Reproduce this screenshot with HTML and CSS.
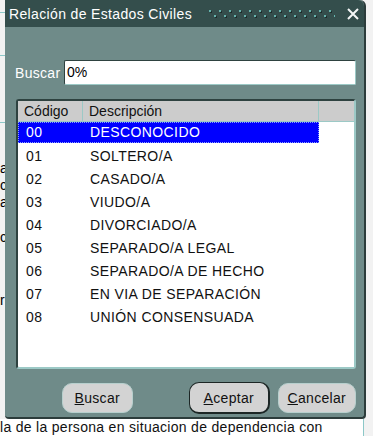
FILE: index.html
```html
<!DOCTYPE html>
<html lang="es">
<head>
  <meta charset="UTF-8">
  <title>Relación de Estados Civiles</title>
  <link rel="stylesheet" href="styles.css">
</head>
<body>
  <!-- page behind the dialog -->
  <div class="page">
    <div class="page-line l1"></div>
    <div class="page-line l2"></div>
    <div class="page-line l3"></div>
    <div class="page-bits">
      <span>a</span><span>c</span><span>a</span><span class="gap">c</span><span class="gap2">r</span>
    </div>
    <div class="page-text">la de la persona en situacion de dependencia con</div>
  </div>

  <!-- LOV dialog -->
  <div class="dialog">
    <div class="title-bar">
      <span class="title">Relación de Estados Civiles</span>
      <svg class="grip" width="126" height="10" viewBox="0 0 126 10">
        <defs>
          <pattern id="dots" width="10" height="10" patternUnits="userSpaceOnUse">
            <rect x="1" y="1" width="2" height="2" fill="#1f2e2d"/>
            <rect x="0" y="0" width="2" height="2" fill="#66b3ad"/>
            <rect x="6" y="6" width="2" height="2" fill="#1f2e2d"/>
            <rect x="5" y="5" width="2" height="2" fill="#66b3ad"/>
          </pattern>
        </defs>
        <rect width="126" height="10" fill="url(#dots)"/>
      </svg>
      <svg class="close" width="12" height="12" viewBox="0 0 12 12">
        <path d="M1 1 L11 11 M11 1 L1 11" stroke="#f4f6f6" stroke-width="2"/>
      </svg>
    </div>
    <div class="dialog-body">
      <div class="search-row">
        <label class="search-label">Buscar</label>
        <div class="search-input">0%</div>
      </div>
      <div class="list">
        <div class="list-head">
          <div class="col-code">Código</div>
          <div class="col-desc">Descripción</div>
          <div class="col-pad"></div>
        </div>
        <div class="row selected"><div class="col-code">00</div><div class="col-desc">DESCONOCIDO</div></div>
        <div class="row"><div class="col-code">01</div><div class="col-desc">SOLTERO/A</div></div>
        <div class="row"><div class="col-code">02</div><div class="col-desc">CASADO/A</div></div>
        <div class="row"><div class="col-code">03</div><div class="col-desc">VIUDO/A</div></div>
        <div class="row"><div class="col-code">04</div><div class="col-desc">DIVORCIADO/A</div></div>
        <div class="row"><div class="col-code">05</div><div class="col-desc">SEPARADO/A LEGAL</div></div>
        <div class="row"><div class="col-code">06</div><div class="col-desc">SEPARADO/A DE HECHO</div></div>
        <div class="row"><div class="col-code">07</div><div class="col-desc">EN VIA DE SEPARACIÓN</div></div>
        <div class="row"><div class="col-code">08</div><div class="col-desc">UNIÓN CONSENSUADA</div></div>
      </div>
      <div class="buttons">
        <button class="btn btn-search"><u>B</u>uscar</button>
        <span class="spacer"></span>
        <button class="btn btn-default"><u>A</u>ceptar</button>
        <button class="btn"><u>C</u>ancelar</button>
      </div>
    </div>
  </div>
</body>
</html>
```

FILE: styles.css
```css
* {
  margin: 0;
  padding: 0;
  box-sizing: border-box;
}
body {
  width: 373px;
  height: 436px;
  overflow: hidden;
  position: relative;
  background: #f2f2f2;
  font-family: "Liberation Sans", Arial, sans-serif;
  font-size: 13px;
  color: #000;
}

/* Page behind */
.page {
  position: relative;
  height: 436px;
}
.page-line {
  position: absolute;
  left: 0;
  width: 8px;
  height: 1px;
  background: #8cc8c8;
}
.l1 { top: 12px; }
.l2 { top: 55px; }
.l3 { top: 122px; }
.page-bits {
  position: absolute;
  left: 0;
  top: 160px;
  display: flex;
  flex-direction: column;
  font-size: 14px;
  line-height: 17px;
}
.page-bits .gap { margin-top: 18px; }
.page-bits .gap2 { margin-top: 46px; }
.page-text {
  position: absolute;
  left: 0;
  top: 419px;
  width: 364px;
  height: 17px;
  border-right: 1px solid #8cc8c8;
  background: #fff;
  font-size: 14px;
  line-height: 17px;
  letter-spacing: 0.3px;
  white-space: nowrap;
  overflow: hidden;
  color: #111;
}

/* Dialog */
.dialog {
  position: absolute;
  left: 5px;
  top: 0;
  width: 361px;
  height: 419px;
  background: #6f8b89;
  border-radius: 0 6px 4px 4px;
  border-right: 2px solid #2c3c3b;
  border-bottom: 2px solid #2c3c3b;
  display: flex;
  flex-direction: column;
}
.title-bar {
  height: 27px;
  background: #344e4c;
  border-radius: 0 6px 0 0;
  display: flex;
  align-items: center;
  padding: 0 5px 0 4px;
  color: #fff;
}
.title {
  font-size: 14px;
  letter-spacing: 0.35px;
  white-space: nowrap;
}
.grip {
  margin-left: 17px;
  margin-top: 3px;
}
.close {
  margin-left: auto;
}
.dialog-body {
  flex: 1;
  padding: 33px 8px 0 10px;
  display: flex;
  flex-direction: column;
}

/* Search */
.search-row {
  display: flex;
  align-items: center;
  height: 25px;
}
.search-label {
  width: 49px;
  color: #fff;
  font-size: 14px;
  letter-spacing: 0.3px;
}
.search-input {
  flex: 1;
  height: 25px;
  background: #fff;
  border: 1px solid #9cc9c6;
  border-top-color: #2e4240;
  border-left-color: #2e4240;
  border-radius: 2px;
  font-size: 14px;
  line-height: 22px;
  padding-left: 2px;
}

/* List */
.list {
  margin-top: 14px;
  margin-left: 1px;
  height: 270px;
  background: #fff;
  border: 2px solid #2e4240;
  border-right-color: #9cc9c6;
  border-bottom-color: #9cc9c6;
  border-radius: 3px;
}
.list-head {
  display: flex;
  height: 21px;
  background: #cccccc;
  border-bottom: 1px solid #9cc9c6;
  font-size: 14px;
  line-height: 20px;
  color: #111;
}
.list-head .col-code {
  width: 65px;
  padding-left: 6px;
  border-right: 1px solid #9cc9c6;
}
.list-head .col-desc {
  width: 236px;
  padding-left: 6px;
  border-right: 1px solid #9cc9c6;
}
.list-head .col-pad {
  flex: 1;
}
.row {
  display: flex;
  height: 23px;
  width: 301px;
  font-size: 14px;
  line-height: 22px;
  letter-spacing: 0.4px;
  color: #111;
}
.row .col-code {
  width: 72px;
  padding-left: 8px;
}
.row.selected {
  background: #0000ff;
  color: #fff;
  outline: 1px dotted #8aa0ff;
  outline-offset: -1px;
  height: 21px;
  margin-bottom: 2px;
  line-height: 21px;
}

/* Buttons */
.buttons {
  display: flex;
  align-items: center;
  margin-top: 13px;
  padding-left: 47px;
}
.spacer {
  width: 57px;
}
.btn {
  font-family: "Liberation Sans", Arial, sans-serif;
  font-size: 14px;
  letter-spacing: 0.3px;
  color: #111;
  height: 30px;
  padding: 0 8px;
  background: #d3d3d3;
  border: 1px solid #b7cfcd;
  border-radius: 10px;
}
.btn-search {
  width: 71px;
}
.btn-default {
  width: 81px;
  height: 32px;
  border: 1px solid #1c2625;
  border-right-width: 2px;
  border-bottom-width: 2px;
  margin-right: 8px;
}
.btn:last-child {
  width: 79px;
}
```
